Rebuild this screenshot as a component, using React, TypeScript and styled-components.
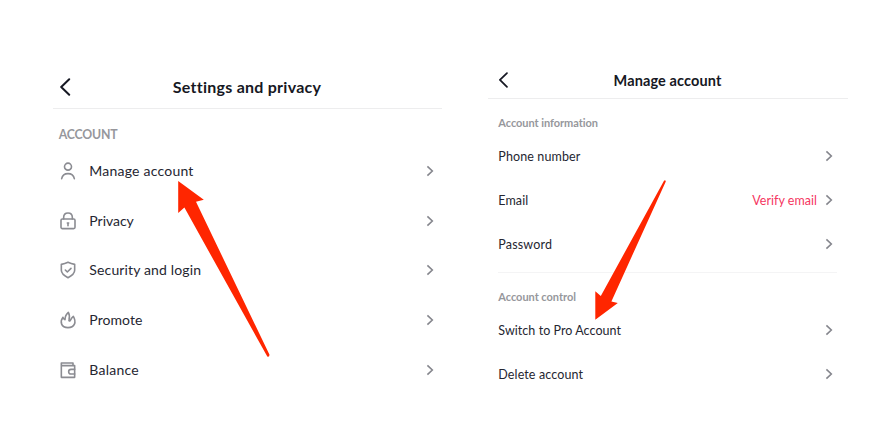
import React from "react";
import styled, { createGlobalStyle } from "styled-components";

const GlobalStyle = createGlobalStyle`
  * { box-sizing: border-box; }
  body { margin: 0; background: #fff; overflow: hidden; }
`;

const Page = styled.main`
  position: relative;
  display: flex;
  align-items: flex-start;
  gap: 46px;
  width: 885px;
  height: 433px;
  padding-left: 53px;
  background: #fff;
  color: #252631;
  font-family: Lato, "Liberation Sans", sans-serif;
`;

const Screen = styled.section<{ $width: number; $top: number }>`
  width: ${(p) => p.$width}px;
  padding-top: ${(p) => p.$top}px;
`;

const Header = styled.header<{ $height: number; $pad: number }>`
  display: grid;
  grid-template-columns: 20px 1fr 20px;
  align-items: center;
  height: ${(p) => p.$height}px;
  padding: 0 ${(p) => p.$pad + 1}px 0 ${(p) => p.$pad}px;
  border-bottom: 1px solid #ededee;
`;

const Title = styled.h1<{ $size: number; $spacing: number; $top?: number }>`
  margin: 0;
  padding-top: ${(p) => p.$top ?? 0}px;
  text-align: center;
  white-space: nowrap;
  font-size: ${(p) => p.$size}px;
  line-height: 20px;
  font-weight: 700;
  letter-spacing: ${(p) => p.$spacing}px;
  color: #161823;
`;

const SectionLabel = styled.h2<{ $height: number; $top: number; $size: number; $spacing: number; $pad: number }>`
  display: flex;
  align-items: center;
  margin: 0;
  height: ${(p) => p.$height}px;
  padding: ${(p) => p.$top}px 0 0 ${(p) => p.$pad}px;
  font-size: ${(p) => p.$size}px;
  font-weight: 700;
  letter-spacing: ${(p) => p.$spacing}px;
  color: #96979c;
`;

const List = styled.ul`
  margin: 0;
  padding: 0;
  list-style: none;
`;

const Row = styled.li<{ $height: number; $left: number; $right: number }>`
  display: flex;
  align-items: center;
  height: ${(p) => p.$height}px;
  padding: 0 ${(p) => p.$right}px 0 ${(p) => p.$left}px;
`;

const RowText = styled.span<{ $size: number; $spacing: number; $top?: number }>`
  flex: 1;
  padding-top: ${(p) => p.$top ?? 0}px;
  white-space: nowrap;
  font-size: ${(p) => p.$size}px;
  line-height: 20px;
  letter-spacing: ${(p) => p.$spacing}px;
`;

const Action = styled.span`
  margin-right: 8px;
  padding-top: 2px;
  font-size: 12.5px;
  line-height: 20px;
  letter-spacing: 0.03px;
  color: #f5365f;
`;

const Divider = styled.hr`
  height: 1px;
  margin: 6px 11px 5px 10px;
  border: 0;
  background: #f4f4f5;
`;

const IconBox = styled.svg`
  width: 18px;
  height: 18px;
  margin-right: 12px;
  fill: none;
  stroke: #8b8c92;
  stroke-width: 4.8;
  stroke-linecap: round;
  stroke-linejoin: round;
`;

const Arrows = styled.svg`
  position: absolute;
  inset: 0;
  fill: #ff2600;
  pointer-events: none;
`;

const BackIcon = ({ scale = 1 }: { scale?: number }) => (
  <svg width={12 * scale} height={18 * scale} viewBox="0 0 12 18" fill="none">
    <path d="M10.2 1.2 2.2 9l8 7.8" stroke="#161823" strokeWidth="2" strokeLinecap="round" strokeLinejoin="round" />
  </svg>
);

const Chevron = () => (
  <svg width="8" height="12" viewBox="0 0 8 12" fill="none">
    <path d="m1.4 1.4 4.9 4.6-4.9 4.6" stroke="#85868d" strokeWidth="1.6" />
  </svg>
);

const icons: Record<string, React.ReactNode> = {
  user: (
    <>
      <ellipse cx="27" cy="14" rx="10.5" ry="10.5" />
      <path d="M8 50c2-10 9-15 19-15s17 5 19 15" />
    </>
  ),
  lock: (
    <>
      <rect x="6" y="21" width="42" height="29" rx="4" />
      <path d="M14 21v-5c0-8 5-13 13-13s13 5 13 13v5" />
      <path d="M27 33v8M25 33h4" />
    </>
  ),
  shield: (
    <>
      <path d="M27 4c6 3 12 5 20 6v18c0 10-8 16-20 22C15 44 7 38 7 28V10c8-1 14-3 20-6Z" />
      <path d="m19 27 6 6 11-11" />
    </>
  ),
  flame: (
    <path d="M28 4c-7 6-10 12-10 22-3-1-5-3-6-7C2 32 6 50 27 50c20 0 26-17 16-34-5 4-7 8-9 12-1 3-5 2-4-1 2-8 2-16-2-23Z" />
  ),
  wallet: (
    <>
      <path d="M42 14V6H7v43h40V14H7" />
      <path d="M47 25H36a7 7 0 0 0 0 14h11" />
    </>
  ),
};

const settings = [
  { icon: "user", text: "Manage account", spacing: 0.22 },
  { icon: "lock", text: "Privacy", spacing: -0.02 },
  { icon: "shield", text: "Security and login", spacing: 0.15 },
  { icon: "flame", text: "Promote", spacing: 0.06 },
  { icon: "wallet", text: "Balance", spacing: 0.25 },
];

const information = [
  { text: "Phone number", spacing: 0.12 },
  { text: "Email", spacing: 0.1, action: "Verify email" },
  { text: "Password", spacing: 0.18 },
];

const control = [
  { text: "Switch to Pro Account", spacing: 0.05 },
  { text: "Delete account", spacing: 0.12 },
];

const AccountRows = ({ items }: { items: { text: string; spacing: number; action?: string }[] }) => (
  <List>
    {items.map((item) => (
      <Row key={item.text} $height={44} $left={10.3} $right={15}>
        <RowText $size={12.5} $spacing={item.spacing} $top={2}>{item.text}</RowText>
        {item.action && <Action>{item.action}</Action>}
        <Chevron />
      </Row>
    ))}
  </List>
);

export default function App() {
  return (
    <>
      <GlobalStyle />
      <Page>
        <Screen $width={389} $top={66}>
          <Header $height={42.5} $pad={6}>
            <BackIcon />
            <Title $size={16} $spacing={0.25}>Settings and privacy</Title>
          </Header>
          <SectionLabel $height={38} $top={14} $size={12.3} $spacing={-0.2} $pad={5.7}>ACCOUNT</SectionLabel>
          <List>
            {settings.map((item) => (
              <Row key={item.text} $height={49.6} $left={6.3} $right={8}>
                <IconBox viewBox="0 0 54 54">{icons[item.icon]}</IconBox>
                <RowText $size={14} $spacing={item.spacing}>{item.text}</RowText>
                <Chevron />
              </Row>
            ))}
          </List>
        </Screen>
        <Screen $width={360} $top={62}>
          <Header $height={37} $pad={10}>
            <BackIcon scale={0.88} />
            <Title $size={14.5} $spacing={0.12} $top={1}>Manage account</Title>
          </Header>
          <SectionLabel $height={35} $top={11} $size={11} $spacing={-0.05} $pad={10.3}>Account information</SectionLabel>
          <AccountRows items={information} />
          <Divider />
          <SectionLabel $height={30} $top={6} $size={11} $spacing={-0.03} $pad={10.3}>Account control</SectionLabel>
          <AccountRows items={control} />
        </Screen>
        <Arrows width="885" height="433" viewBox="0 0 885 433">
          <path d="M178.2 181 203.8 199.7 196 201.8 269.5 354.8Q269.3 357.5 267.3 356.6L184.4 207.6 178.2 213Z" />
          <path d="M664 180.8Q665.4 179.6 665.8 181.4L611.4 301.4 617.8 303 595.3 319.8V291.3L600.8 296Z" />
        </Arrows>
      </Page>
    </>
  );
}
